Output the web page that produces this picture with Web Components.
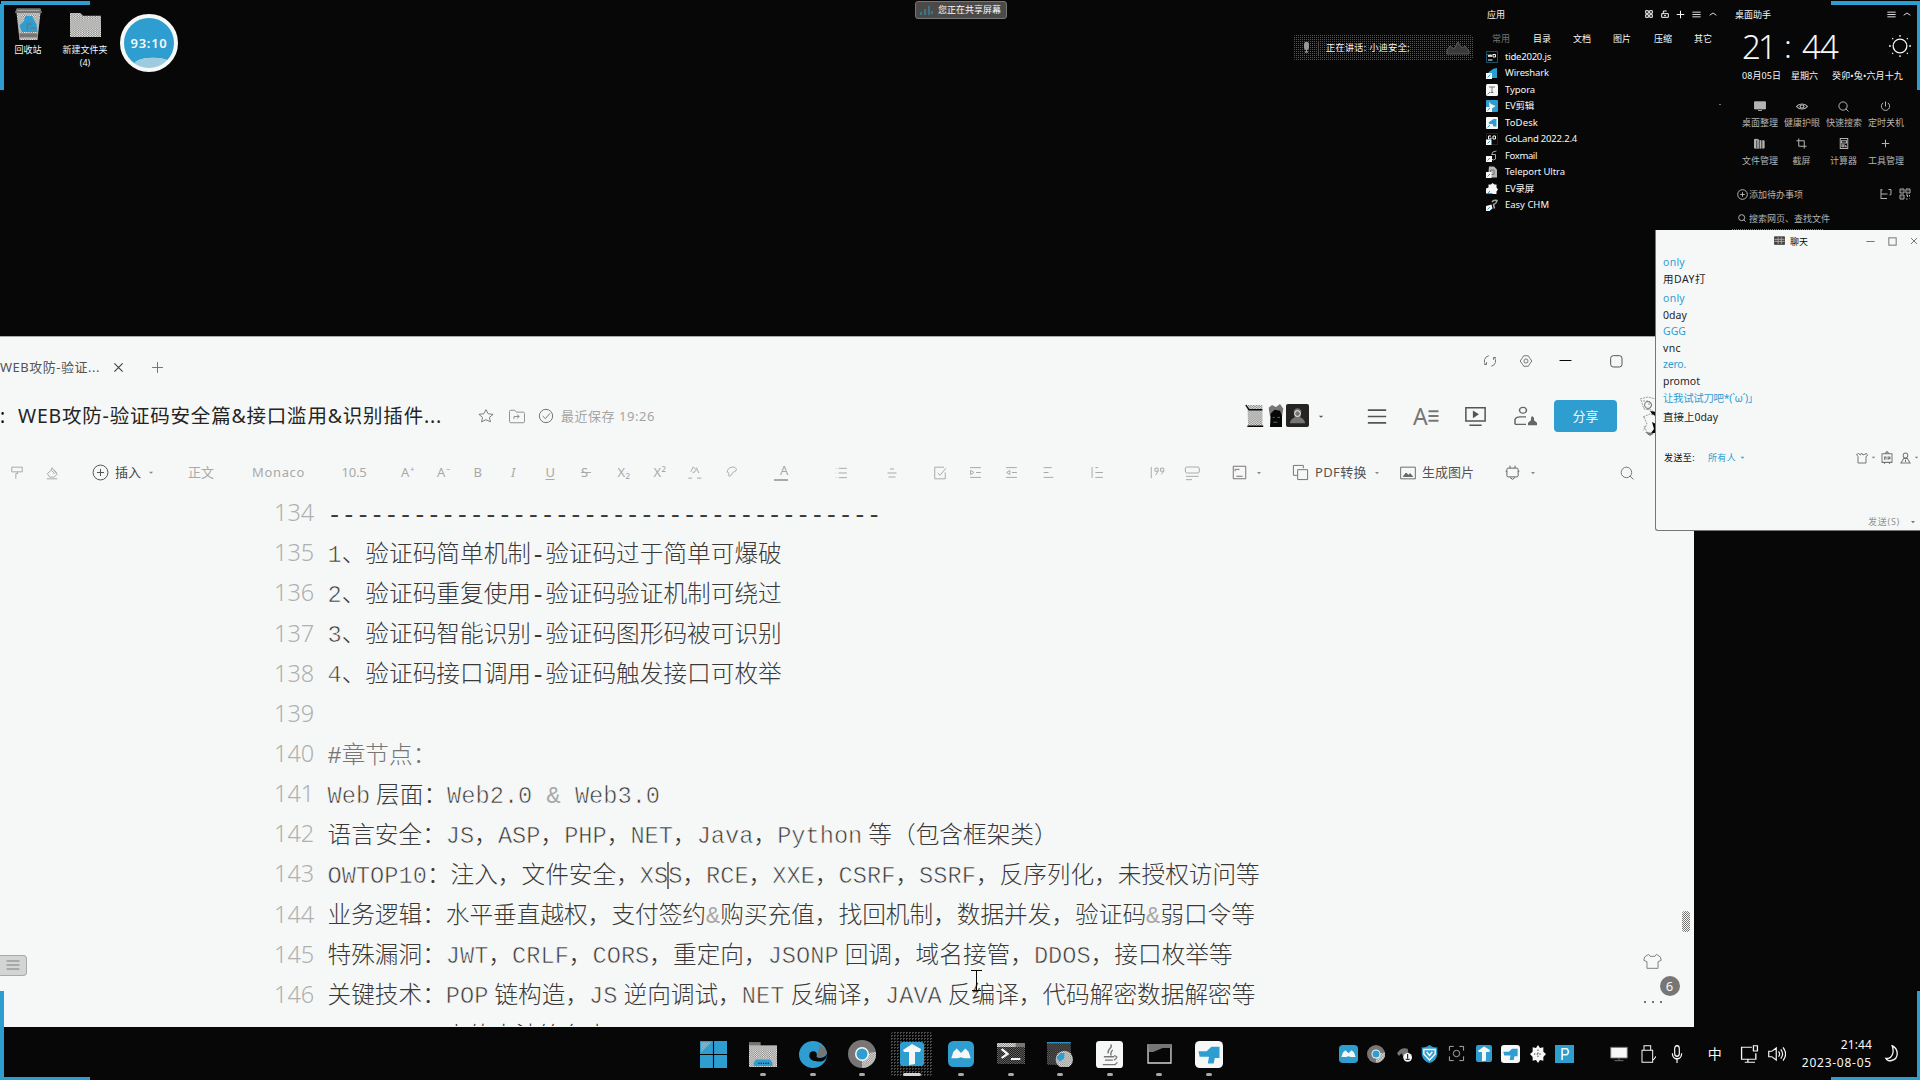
<!DOCTYPE html>
<html lang="zh-CN">
<head>
<meta charset="utf-8">
<title>Desktop</title>
<style>
html,body{margin:0;background:#070707;overflow:hidden}
body{width:1920px;height:1080px}
</style>
</head>
<body>
<desk-top></desk-top>
<script>
const BASE = `*{box-sizing:border-box}
:host{--k:#070707;--w:#f6f8f8;--g:#787674;--b:#2e9dd0;display:block;font-family:"Noto Sans","Noto Sans CJK SC",sans-serif;line-height:1}
.row{display:flex;align-items:center;white-space:nowrap}
.c{display:flex;flex:none;align-items:center;justify-content:center}`;

const ICONS = {
  star:'<path d="M12 2.5l2.9 6.2 6.6.8-4.9 4.6 1.3 6.7L12 17.500l-5.900 3.300 1.300-6.700L2.500 9.500l6.600-.8z"/>',
  movefolder:'<path d="M4 2h5l2 3h9q2 0 2 2v13q0 2-2 2H4q-2 0-2-2V4q0-2 2-2zM8 16v-4h7m-3-3 3 3-3 3"/>',
  okc:'<circle cx="12" cy="12" r="10"/><path d="M7 12l4 4 7-8"/>',
  x:'<path d="M3 3l18 18M21 3L3 21"/>',
  plus:'<path d="M12 2v20M2 12h20"/>',
  min:'<path d="M1 12h22"/>',
  sq:'<rect x="4" y="4" width="17" height="17" rx="4"/>',
  sqh:'<rect x="4" y="4" width="16" height="16"/>',
  refresh:'<path d="M10 3a9.500 9.500 0 0 0-5 16M14 21a9.500 9.500 0 0 0 5-16M2 18h4v-4M22 6h-4v4"/>',
  gear:'<path d="M8 3h8l2 3.500 4 5.500-4 5.500-2 3.500H8l-2-3.500L2 12l4-5.500z"/><circle cx="12" cy="12" r="3.500"/>',
  roller:'<path d="M3 2h18v8H3zM13 10v3h-3v9"/>',
  broom:'<path d="M3 22h18M4 13l6-5 2-5 3 4 6 7-5 5H8zM11 7l6 7M15 6l5 6"/>',
  pcirc:'<circle cx="12" cy="12" r="10.500"/><path d="M12 7v10M7 12h10"/>',
  menu:'<path d="M1 4h22M1 12h22M1 20h22"/>',
  up:'<path d="M2 17l10-9 10 9"/>',
  down:'<path d="M3 8h18l-9 10z" fill="currentColor" stroke="none"/>',
  downo:'<path d="M4 8l8 9 8-9z" fill="currentColor" stroke="none"/>',
  four:'<path d="M2 2h8v8H2zM14 2h8v8h-8zM2 14h8v8H2zM14 14h8v8h-8z"/>',
  lock:'<path d="M2 11h20v11H2zM7 11V3h10M9 17h6"/>',
  sun:'<circle cx="12" cy="12" r="7.500"/><path d="M12 0v2M12 22v2M0 12h2M22 12h2M3.500 3.500l1 1M19.500 19.500l1 1M20.500 3.500l-1 1M3.500 20.500l1-1"/>',
  monitor:'<path d="M1 2h22v17H1zM8 23h8" fill="currentColor"/>',
  eye:'<path d="M1 12c5-9 17-9 22 0-5 9-17 9-22 0z"/><circle cx="12" cy="12" r="4"/>',
  search:'<circle cx="11" cy="11" r="9"/><path d="M17 17l6 6"/>',
  power:'<path d="M12 1v11M7 4a9 9 0 1 0 10 0"/>',
  folders:'<path d="M1 3h7l3 2v17H1zM12 6h4v16h-4zM18 6h4v16h-4z" fill="currentColor"/><path d="M6 5v17M11.500 5v17M17 5v17" stroke="#070707" stroke-width="1.500"/>',
  crop:'<path d="M6 1v17h17M1 6h17v17"/>',
  calc:'<path d="M3 1h18v22H3zM6 6h12v5H6zM7 15v4h5v-4zM16 15v4h3"/>',
  list2:'<path d="M2 2v20M2 4h3M2 12h13M2 21h12M17 3h5v10l-3 1"/>',
  qr:'<path d="M2 2h8v8H2zM14 2h8v8h-8zM2 14h8v8H2zM5 5.500h2M17 5.500h2M5 18h2M14 14h3v4M21 14v3M14 22h3M21 21v1"/>',
  pdf:'<path d="M16 6V2H2v14h5M8 8h14v14H8z"/>',
  img:'<path d="M1 2h22v20H1z"/><path d="M5 18l4-6 4 4 2-3 4 5z" fill="currentColor"/>',
  plug:'<path d="M5 5h14q2 0 2 2v10q0 2-2 2H5q-2 0-2-2V7q0-2 2-2zM8 5V1M16 5V1M8 20l4 3 4-3M1 10h2M21 10h2"/>',
  tpl:'<path d="M2 2h20v20H2zM6 7h6M7 18h10M5 10V6"/>',
  lst:'<path d="M8 4h14M8 12h14M8 20h14M3 4h1M3 12h1M3 20h1"/>',
  cen:'<path d="M8 4h8M3 12h18M5 20h14"/>',
  chk:'<path d="M3 2h16M3 2v20h18V11M8 12l4 4L22 4"/>',
  ind:'<path d="M2 3h20M13 12h9M2 21h20M3 8l6 4-6 4z"/>',
  out:'<path d="M2 3h20M13 12h9M2 21h20M9 8l-6 4 6 4z"/>',
  ali:'<path d="M3 3h15M3 12h9M3 21h18"/>',
  vli:'<path d="M2 2v20M8 3h5M8 12h14M8 21h14"/>',
  quo:'<path d="M2 3v18M13 10H8V5h5v5l-4 6M22 10h-5V5h5v5l-4 5"/>',
  cmt:'<path d="M4 3h17q2 0 2 3v3q0 3-2 3H4q-2 0-2-3V6q0-3 2-3zM3 17h19M3 22h9"/>',
  pal:'<path d="M4 12C4 0 20 0 21 6c0 6-6 3-8 8-1 5-6 6-7 3 3-2 0-5-1-6"/>',
  wave:'<path d="M2 21h6M16 21h7M6 11l4-8 5 5-5 5M15 4l4 9M9 13l3-3"/>',
  play:'<path d="M1 2h22v15H1zM5 22h14"/><path d="M9 5l7 4.500L9 14z" fill="currentColor" stroke="none"/>',
  ppl:'<circle cx="10" cy="5" r="3.500"/><path d="M2 22v-6q1-3 5-3h6M2 22h11"/><path d="M19 12l2 2v3l3 3v3h-9v-3l3-3v-3z" fill="currentColor" stroke="none"/>',
  ghost:'<path d="M4 22V9L1 5l4-2 4 3 2-4 3 4 7-3 2 4-3 2v13z"/>',
  robot:'<path d="M2 5h20v16H2zM8 5l4-4 4 4M7 16v-5h3v5M14 16v-5h4v3h-4M6 23h2M16 23h2"/>',
  user:'<circle cx="12" cy="7" r="5"/><path d="M2 22l6-9h8l6 9zM12 15v5"/>',
  shirt:'<path d="M7 2 2 6 1 11l4 2v10h14V13l4-2-1-5-5-4-2 3H9z"/>',
  mic:'<rect x="8" y="1" width="8" height="14" rx="4"/><path d="M4 11c0 10 16 10 16 0M12 18v6"/>',
  micf:'<rect x="5" y="1" width="14" height="15" rx="6" fill="currentColor"/><path d="M12 16v6M7 22h10"/>',
  usb:'<path d="M6 1h10v6H6zM3 7h16v16H3zM20 20l4-5"/>',
  pc:'<path d="M1 2h22v16H1z" fill="#f6f8f8" stroke="#787674"/><path d="M12 18v3M6 22h12"/>',
  net:'<path d="M15 3H2v16h18V11M17 1h5v7h-5zM6 23h13M10 19v4"/>',
  spk:'<path d="M1 8h4l6-5v18l-6-5H1zM14 8q3 4 0 8M17 5q5 7 0 14M20 2q7 10 0 20"/>',
  moon:'<path d="M13 1c10 4 12 18-1 21-4 1-8-1-9-3 10 1 14-9 10-18z"/>',
  chat:'<path d="M1 2h22v18H1z" fill="currentColor"/><path d="M1 8h22M1 13h22M9 3v16M16 3v16" stroke="#a9a8a6"/>',
  scan:'<path d="M2 8V2h6M16 2h6v6M22 16v6h-6M8 22H2v-6"/><circle cx="12" cy="12" r="4.500"/>'
};
/* filled, multicolour artwork on the same 24 grid */
const ART = {
  win:'<path fill="#2e9dd0" d="M0 0h11.500v11.500H0zM12.500 0H24v11.500H12.500zM0 12.500h11.500V24H0zM12.500 12.500H24V24H12.500z"/><path fill="url(#ck)" d="M1 1h9L1 10z" opacity=".6"/>',
  explorer:'<path fill="#787674" d="M0 1h10v6H0z"/><path fill="url(#ck)" d="M0 4h24v20H0z"/><path fill="#2e9dd0" d="M6 17h12l2 3v3H4v-3z"/><path stroke="#070707" stroke-dasharray="1 1" d="M8 20.500h9"/>',
  edge:'<circle cx="12" cy="12" r="12" fill="#2e9dd0"/><path d="M9 12c0-4 8-4 6 2 4 2 8 0 9-3 0 6-4 8-9 7-4 0-7-3-6-6z" fill="#070707"/><path fill="#787674" d="M17 3c4 2 7 5 7 8l-6 4c-3 0-3-2-2-4 1-3 2-5 1-8z"/>',
  chrome:'<circle cx="12" cy="12" r="12" fill="#787674"/><path d="M12 12L24 10A12 12 0 0 1 12 24z" fill="url(#ck)"/><circle cx="12" cy="12" r="6" fill="#f6f8f8"/><circle cx="12" cy="12" r="4.700" fill="#2e9dd0"/>',
  typora:'<rect width="24" height="24" rx="3" fill="#2e9dd0"/><path fill="#f6f8f8" d="M3 8l9-6 9 5-1 3h-5v12l-6 1V10H4z"/>',
  mi:'<rect width="24" height="24" rx="5" fill="#2e9dd0"/><path fill="#f6f8f8" d="M3 16l2-6 3-3 4 4 4-4 3 3 2 6h-6l-3-1-3 1z"/>',
  term:'<path fill="url(#dk)" d="M0 2h24v20H0z"/><path fill="url(#ck)" d="M0 1h18v4H0z"/><path fill="#787674" d="M16 1h8v4h-8z"/><path d="M4 7l5 5-5 4M12 17h8" stroke="#f6f8f8" stroke-width="2.200" fill="none"/>',
  py:'<path fill="url(#dk)" d="M0 2h22v20H0z"/><path fill="#2e9dd0" d="M0 1h22v1.200H0z"/><circle cx="16" cy="17" r="8" fill="url(#ck)"/><path fill="#2e9dd0" d="M9 16l3-5h4v5l-4 3z"/>',
  java:'<rect width="24" height="24" rx="3" fill="#f6f8f8"/><path d="M13 3c3 3-4 4-2 8M15 8c-3 2-1 3-2 5M7 14h9M8 17h7M6 21h11l2-2M16 13q5 1 0 4" fill="none" stroke="#787674" stroke-width="1.200"/>',
  cmd:'<path fill="#070707" stroke="#d3d4d4" stroke-width="1.300" d="M1 3h22v18H1z"/><path fill="#787674" d="M1 2h22v4h-8l-9 4H2z"/>',
  todesk:'<rect width="24" height="24" rx="4" fill="#f6f8f8"/><path fill="#2e9dd0" d="M3 9h7l4-4h7v10h-4l-1 5h-5l1-6H4z"/>',
  bin:'<path fill="url(#ck)" d="M1 1h22l-3 23H4z"/><path fill="none" stroke="#787674" stroke-width="1.500" d="M2 1h20l1 2H1z"/><path fill="#787674" d="M4 19h16v3H4z"/><path fill="#2e9dd0" d="M9 6h6l4 6 1 6H6l-2-5 4-3z"/><path fill="none" stroke="#787674" d="M11 11v6M11 12h4M14 15h5"/>',
  folder:'<path fill="url(#ck)" d="M0 1h8l2 2.500h14V24H0z"/>',
  js:'<path fill="#070707" stroke="#2e9dd0" d="M1 1h22v22H1z"/><path stroke="#f6f8f8" stroke-width="2" fill="none" d="M4 7l2 5 2-5 2 5 2-5M14 12V7h5v5h-5M4 18h9"/>',
  shark:'<path fill="#2e9dd0" d="M2 15Q10 3 22 2v20H8z"/><path fill="#f6f8f8" d="M0 12h12v12H0z"/><path stroke="#2e9dd0" stroke-width="2" d="M3 21l6-6"/>',
  wbox:'<rect width="24" height="24" rx="3" fill="#f6f8f8"/><path stroke="#787674" stroke-width="2" fill="none" d="M6 6h12M12 6v11M9 17h6"/><path stroke="#2e9dd0" stroke-width="2" d="M3 21l5-5"/>',
  bbox:'<rect width="24" height="24" rx="2" fill="#2e9dd0"/><path fill="#f6f8f8" d="M6 4l4 4 9 4-7 5v7H0V14h7z"/><path stroke="#2e9dd0" stroke-width="2" d="M3 21l5-5"/>',
  tdk:'<rect width="24" height="24" rx="2" fill="#f6f8f8"/><path fill="#2e9dd0" d="M5 11l10-7h6v15h-6l-2-5H7z"/><path stroke="#2e9dd0" stroke-width="2" d="M3 21l5-5"/>',
  golnd:'<path fill="#070707" stroke="#787674" stroke-dasharray="2 2" d="M1 1h22v22H1z"/><path fill="none" stroke="#f6f8f8" stroke-width="2" d="M10 6H5v6h5V9M14 6h5v6h-5z"/><path fill="#f6f8f8" d="M0 13h11v11H0z"/><path stroke="#2e9dd0" stroke-width="2" d="M3 21l5-5"/>',
  fox:'<path fill="none" stroke="#a9a8a6" stroke-width="2" d="M21 2q-9 0-10 7h8v9q-4 4-8 0"/><path fill="#f6f8f8" d="M0 12h12v12H0z"/><path stroke="#2e9dd0" stroke-width="2" d="M3 21l5-5"/>',
  tele:'<path fill="url(#ck)" d="M6 1h10l6 6v16H4z"/><path fill="none" stroke="#787674" stroke-width="2" d="M9 8h7v9H9z"/><path fill="#f6f8f8" d="M0 12h11v12H0z"/><path stroke="#2e9dd0" stroke-width="2" d="M3 21l5-5"/>',
  blob:'<path fill="#f6f8f8" d="M5 3h5l3-3 4 3h4v6l3 4-3 4v5h-6l-4-1H0V11l5-2z"/><path stroke="#2e9dd0" stroke-width="2" d="M3 21l5-5"/>',
  chm:'<path fill="none" stroke="#a9a8a6" stroke-width="3" d="M12 6q3-5 10-3-1 6-7 8l2 8"/><path fill="#f6f8f8" d="M0 14l11-3 2 8-6 5H0z"/><path stroke="#2e9dd0" stroke-width="2" d="M3 21l5-5"/>',
  bug:'<path fill="#787674" d="M0 11Q6 1 16 4l2 10-8 4-3-7-4 4z"/><circle cx="16" cy="17" r="6.500" fill="#f6f8f8"/><path stroke="#070707" stroke-width="1.500" d="M16 12v7M13 20h6"/>',
  shield:'<path fill="#2e9dd0" d="M1 3q6 1 11-3 5 4 11 3v10q-2 9-11 11Q3 22 1 13z"/><path fill="none" stroke="#f6f8f8" stroke-width="2" d="M4 6h16v6l-8 8-8-8zM8 9l4 5 4-5"/>',
  flower:'<path fill="#f6f8f8" d="M9 4l3-4 3 4 5-1v6l4 3-4 4v5l-5-1-3 4-3-4-5 1v-5l-4-4 4-3V3z"/><path stroke="#787674" stroke-dasharray="2 2" stroke-width="2" d="M6 12h12M12 6v12"/>',
  p:'<path fill="#2e9dd0" d="M0 0h24v24H0z"/><path fill="none" stroke="#f6f8f8" stroke-width="2" d="M9 20V5h6q4 4 0 8H9"/>',
  av1:'<path fill="url(#ck)" d="M3 1h19v23H4z"/><path stroke="#070707" stroke-width="1.500" fill="none" d="M1 1l4 5h17M3 23.200h20"/>',
  av2:'<path fill="#787674" d="M1 4L6 1l6 2 6-3 5 5-2 8H3z"/><path fill="#070707" d="M4 10l6-4 8 1 3 5v12H3z"/><path stroke="#787674" d="M7 14h3M14 14h4M8 19h6"/>',
  av3:'<rect width="24" height="24" rx="2" fill="#252423"/><path fill="#787674" d="M4 20q1-5 5-6l-1-7q4-5 8 0l-1 7q4 1 5 6z"/><circle cx="12" cy="10" r="3" fill="none" stroke="#f6f8f8"/>'
};
const DEFS='<defs><pattern id="ck" width="2" height="2" patternUnits="userSpaceOnUse"><path fill="#787674" d="M0 0h2v2H0z"/><path fill="#f6f8f8" d="M0 0h1v1H0zM1 1h1v1H1z"/></pattern><pattern id="dk" width="2" height="2" patternUnits="userSpaceOnUse"><path fill="#070707" d="M0 0h2v2H0z"/><path fill="#787674" d="M0 0h1v1H0zM1 1h1v1H1z"/></pattern></defs>';

class UiIcon extends HTMLElement{
  connectedCallback(){
    if(this.shadowRoot)return;
    const n=this.getAttribute('name'),w=+this.getAttribute('w')||16,h=+this.getAttribute('h')||w,sw=+this.getAttribute('sw')||1;
    const art=ART[n];
    this.attachShadow({mode:'open'}).innerHTML=`<style>:host{display:block;flex:none;width:${w}px;height:${h}px}svg{display:block}</style>
    <svg width="${w}" height="${h}" viewBox="0 0 24 24" preserveAspectRatio="none" fill="none" ${art?'':`stroke="currentColor" stroke-width="${sw*24/w}"`}>${DEFS}${art||ICONS[n]||''}</svg>`;
  }
}
customElements.define('ui-icon',UiIcon);

/* A single line of text whose tracking is set so that it fills the width w. */
class FitText extends HTMLElement{
  connectedCallback(){
    if(this.shadowRoot)return;
    const w=+this.getAttribute('w');
    this.attachShadow({mode:'open'}).innerHTML=`<style>:host{display:inline-block;flex:none;width:${w}px;white-space:pre}span{display:inline-block}</style><span><slot></slot></span>`;
    const s=this.shadowRoot.querySelector('span'),n=[...this.textContent].length;
    const nat=s.getBoundingClientRect().width;
    if(nat)s.style.letterSpacing=((w-nat)/n).toFixed(3)+'px';
  }
}
customElements.define('fit-text',FitText);

const T=(x,w,t,st='')=>[x,w,`<fit-text w="${w}" style="${st}">${t}</fit-text>`];
const I=(cx,w,name,o={})=>[cx-w/2,w,`<ui-icon name="${name}" w="${w}" h="${o.h||w}" sw="${o.sw||1}" style="${o.c?'color:'+o.c+';':''}${o.st||''}"></ui-icon>`];
/* Flex row: every item keeps its own width, and the gap before it. */
function row(x0,h,items,st=''){
  let p=x0,o=`<div class="row" style="height:${h}px;${st}">`;
  for(const [x,w,html] of items){o+=`<span class="c" style="margin-left:${+(x-p).toFixed(2)}px;width:${w}px">${html}</span>`;p=x+w}
  return o+'</div>';
}
function define(tag,css,html){
  customElements.define(tag,class extends HTMLElement{
    connectedCallback(){
      if(this.shadowRoot)return;
      this.attachShadow({mode:'open'}).innerHTML=`<style>${BASE}${css}</style>${html}`;
    }
  });
}

define('desk-shortcut',':host{width:60px;color:#f6f8f8;font-size:9px;text-align:center}div{display:flex;flex-direction:column;align-items:center}.i{height:36px;padding-bottom:2px;justify-content:center}.t{line-height:13px;white-space:pre}',
  '<div class="i"><slot name="icon"></slot></div><div class="t"><slot></slot></div>');

define('timer-ball',`:host{width:58px;height:58px}
.o{width:58px;height:58px;border-radius:50%;border:4px solid var(--w);background:radial-gradient(ellipse 26px 9px at 29px 46px,#9fcbe0 70%,transparent 74%),var(--b);display:flex;align-items:center;justify-content:center;color:var(--w);font-size:13px;font-weight:600}`,
  '<div class="o"><fit-text w="37">93:10</fit-text></div>');

define('share-badge',`:host{width:92px;height:18px;border-radius:3px;border:1px solid var(--g);background:#4b4a49;color:var(--w);font-size:9px}`,
  row(915,16,[[919,14,'<svg width="14" height="12" fill="none" stroke="#2e9dd0"><path d="M1 11V8M5 11V5M9 11V2M12 10V7"/></svg>'],T(937,63,'您正在共享屏幕','margin-top:-1px')]));

define('speaker-pill',`:host{width:180px;height:25px;border-radius:3px;color:var(--w);font-size:9px;background:repeating-conic-gradient(#565453 0 25%,#070707 0 100%) 0 0/2px 2px}`,
  row(1293,25,[I(1306,7,'micf',{h:11,c:'#9a9896'}),[1318,1,'<i style="width:1px;height:14px;background:#4b4a49"></i>'],T(1326,84,'正在讲话: 小迪安全;','text-shadow:0 0 2px #000'),[1446,24,'<svg width="24" height="14" fill="#3a3938" stroke="#5b5a58"><path d="M1 13V9l3-4 4 3 4-7 4 6 3-2 4 5v3z"/></svg>']]));

const apps=[['js','tide2020.js',46],['shark','Wireshark',44],['wbox','Typora',30],['bbox','EV剪辑',29],['tdk','ToDesk',33],['golnd','GoLand 2022.2.4',72],['fox','Foxmail',32],['tele','Teleport Ultra',60],['blob','EV录屏',29],['chm','Easy CHM',44]];
define('app-panel',`:host{width:240px;color:var(--w);font-size:9.5px}`,
  row(1480,16,[T(1487,18,'应用','font-size:9px'),I(1649,8,'four'),I(1665,8,'lock'),I(1680,9,'plus'),I(1696,9,'menu',{h:7}),I(1712.5,8,'up',{h:6})],'margin-bottom:8px')+
  row(1480,16,[['常用',1492,'#787674'],['目录',1533],['文档',1573],['图片',1613],['压缩',1654],['其它',1694]].map(a=>T(a[1],18,a[0],`font-size:9px;color:${a[2]||'#f6f8f8'}`)),'margin-bottom:2px')+
  apps.map(a=>row(1480,16.5,[I(1492,12,a[0],{st:'margin-top:1px'}),T(1505,a[2],a[1])])).join(''));

define('assist-panel',`:host{width:190px;color:var(--w);font-size:9px}.dim{color:#b4b3b1}`,
  row(1730,16,[T(1735,36,'桌面助手'),I(1891.5,9,'menu',{h:7}),I(1907,8,'up',{h:6})],'margin-bottom:2px')+
  row(1730,44,[T(1742,32,'21','font-size:33px;font-weight:300'),T(1784,9,':','font-size:32px;font-weight:300'),T(1802,36,'44','font-size:33px;font-weight:300'),I(1900,22,'sun',{sw:1.3})])+
  row(1730,16,[T(1742,39,'08月05日'),T(1791,27,'星期六'),T(1832,71,'癸卯•兔•六月十九')],'margin:-1px 0 15px')+
  '<div class="dim">'+
  row(1730,16,[I(1760,12,'monitor',{h:10}),I(1802,12,'eye',{h:9,sw:1.300}),I(1843,11,'search'),I(1885.5,11,'power')])+
  row(1730,18,[T(1742,36,'桌面整理'),T(1784,36,'健康护眼'),T(1826,36,'快速搜索'),T(1868,36,'定时关机')],'margin:-1px 0 4px')+
  row(1730,16,[I(1759,11,'folders'),I(1801.500,11,'crop'),I(1843.500,10,'calc',{h:11}),I(1885.500,9,'plus')],'margin-bottom:2px')+
  row(1730,16,[T(1742,36,'文件管理'),T(1792.500,18,'截屏'),T(1830,27,'计算器'),T(1868,36,'工具管理')],'margin:-1px 0 18px')+
  row(1730,16,[I(1742,11,'pcirc'),T(1749,54,'添加待办事项'),I(1886,12,'list2'),I(1905,12,'qr')],'margin-bottom:8px')+
  row(1730,16,[I(1741.500,8,'search'),T(1749,81,'搜索网页、查找文件')])+
  '</div>');

const msgs=[['only',263,22,1],['用DAY打',280,43,0],['only',299,22,1],['0day',315.500,24,0],['GGG',332,23,1],['vnc',348.500,18,0],['zero.',365,23,1],['promot',381.500,37,0],['让我试试刀吧*(`ω´)」',399,95,1],['直接上0day',418,55,0]];
let mp=249.3;
const msgHtml=msgs.map(m=>{const mt=m[1]-8-mp;mp=m[1]+8;return row(1656,16,[T(1663,m[2],m[0])],`margin-top:${mt.toFixed(1)}px;color:${m[3]?'#2e9dd0':'#252423'}`)}).join('');
define('chat-window',`:host{width:265px;height:301px;background:var(--w);border-left:1px solid var(--g);border-bottom:1px solid var(--g);border-bottom-left-radius:3px;font-size:10.5px;color:var(--k)}`,
  row(1656,19,[I(1779.500,11,'chat',{h:10,c:'#454443'}),T(1790,18,'聊天','font-size:9px'),I(1870,9,'min',{c:'#787674'}),I(1892,11,'sqh',{c:'#787674'}),I(1914,8,'x',{c:'#787674'})],'padding-top:3px')+
  msgHtml+
  row(1656,16,[T(1664,31,'发送至:','font-size:9px'),T(1708,28,'所有人','font-size:9px;color:#2e9dd0'),I(1742.500,5,'down',{c:'#2e9dd0'}),I(1862,12,'ghost',{c:'#787674'}),I(1873,5,'downo',{c:'#787674'}),I(1887,12,'robot',{c:'#787674',h:13}),I(1905.500,11,'user',{c:'#787674',h:12}),I(1916,5,'downo',{c:'#787674'})],'margin-top:24px')+
  row(1656,16,[T(1868,32,'发送(S)','font-size:9px;color:#92918f'),I(1913,6,'downo',{c:'#787674'})],'margin-top:48px'));

define('doc-titlebar',`:host{color:#252423;margin-top:-1px}`,
  row(0,48,[T(0,100,'WEB攻防-验证...','font-size:13px;color:#565453'),I(118.500,11,'x',{c:'#454443',sw:1.200}),I(157.500,13,'plus',{c:'#787674'}),
    I(1490,14,'refresh',{c:'#787674',st:'margin-top:-13px'}),I(1526,14,'gear',{c:'#787674',st:'margin-top:-13px'}),I(1565,13,'min',{c:'#070707',st:'margin-top:-13px'}),I(1616,16,'sq',{c:'#565453',st:'margin-top:-13px'})],'padding-top:14px'));

define('doc-header',`.b{width:63px;height:32px;border-radius:4px;background:var(--b);color:var(--w);display:flex;align-items:center;justify-content:center;font-size:13px}`,
  row(0,64,[T(0,5,':','font-size:19px'),T(18,424,'WEB攻防-验证码安全篇&amp;接口滥用&amp;识别插件...','font-size:19.500px;color:#252423'),
   I(485.500,18,'star',{h:16,c:'#787674'}),I(517,18,'movefolder',{h:15,c:'#8a8987'}),I(546,16,'okc',{c:'#787674'}),T(561,94,'最近保存 19:26','font-size:13px;color:#a5a5a4'),
   I(1254.500,19,'av1',{h:23,st:'margin-top:-1px'}),I(1276,16,'av2',{h:23,st:'margin-top:-1px'}),I(1297.500,23,'av3',{st:'margin-top:-1px'}),I(1320.500,6,'down',{c:'#565453',h:5}),
   I(1376.500,20,'menu',{h:19,c:'#565453',sw:1.700}),T(1413,15,'A','font-size:23px;color:#787674;'),I(1433,11,'menu',{h:14,c:'#787674',sw:1.600}),
   I(1475.500,21,'play',{c:'#565453',sw:1.500}),I(1524.500,24,'ppl',{c:'#666563',h:20,sw:1.500}),[1554,63,'<div class="b"><fit-text w="26">分享</fit-text></div>'],
   [1639,17,'<svg width="17" height="40"><g fill="none" stroke="#9a9997" stroke-dasharray="2 1"><path d="M1 3l8-2 8 2M2 4l3 9 7 1 5 3M4 5h6l3 4-4 5M9 8h3M4 21l7-3 6 2M5 21l3 7-4 7M5 30l4 8h6"/></g><circle cx="9" cy="9" r="3.500" fill="none" stroke="#787674"/><path d="M11 15l6 1v4l-4-2zM13 26l4 2v9h-5l3-4z" fill="#070707"/><path d="M6 36l9 1-4 3z" fill="#787674"/></svg>']]));

const L='#a9a9a8',TX=(cx,w,t,st='')=>T(cx-w/2,w,t,`color:${L};font-size:13px;${st}`);
define('doc-toolbar',`:host{position:relative}`,
  row(0,48,[I(17,14,'roller',{c:L}),I(52,14,'broom',{c:L}),I(100.500,17,'pcirc',{c:'#565453'}),T(115,26,'插入','font-size:13px;color:#454443'),I(150.500,6,'down',{c:'#8a8987',h:5}),
  TX(201,26,'正文'),TX(278.500,53,'Monaco'),TX(354,25,'10.5'),TX(408,14,'A⁺'),TX(444,14,'A⁻'),TX(478,9,'B'),TX(514,6,'I','font-style:italic'),TX(550,9,'<span style="text-decoration:underline;text-underline-offset:2px">U</span>'),TX(586,10,'<span style="text-decoration:line-through">S</span>'),TX(624,13,'X₂'),TX(660,13,'X²'),
  I(694.500,15,'wave',{c:L}),I(731,13,'pal',{c:L}),TX(781,14,'A','border-bottom:2px solid #a9a9a8;height:17px;text-indent:3px'),I(841,14,'lst',{c:L}),I(892,12,'cen',{c:L}),I(939.500,14,'chk',{c:L}),I(975,13,'ind',{c:L}),I(1011,13,'out',{c:L}),I(1048,13,'ali',{c:L}),I(1097,13,'vli',{c:L}),I(1157,15,'quo',{c:L}),I(1192,16,'cmt',{c:L}),
  I(1239,15,'tpl',{c:'#787674'}),I(1258.500,6,'downo',{c:'#8a8987'}),I(1300.500,17,'pdf',{c:'#787674'}),T(1315,52,'PDF转换','font-size:13px;color:#565453'),I(1376.500,6,'downo',{c:'#8a8987'}),I(1407.500,16,'img',{h:14,c:'#666563'}),T(1422,52,'生成图片','font-size:13px;color:#565453'),I(1512,15,'plug',{c:'#666563'}),I(1533,6,'downo',{c:'#8a8987'}),I(1627,14,'search',{c:'#787674'})],'padding-top:1px'));

const S='<b> </b>';
const lines=[
 ['134','-'.repeat(39)],['135','1、验证码简单机制-验证码过于简单可爆破'],['136','2、验证码重复使用-验证码验证机制可绕过'],['137','3、验证码智能识别-验证码图形码被可识别'],['138','4、验证码接口调用-验证码触发接口可枚举'],['139',''],['140','<em>#章节点：</em>'],
 ['141',`Web${S}层面：Web2.0 <s>&amp;</s> Web3.0`],['142',`语言安全：JS，ASP，PHP，NET，Java，Python${S}等（包含框架类）`],
 ['143','OWTOP10：注入，文件安全，XS<u></u>S，RCE，XXE，CSRF，SSRF，反序列化，未授权访问等'],
 ['144','业务逻辑：水平垂直越权，支付签约<s>&amp;</s>购买充值，找回机制，数据并发，验证码<s>&amp;</s>弱口令等'],
 ['145',`特殊漏洞：JWT，CRLF，CORS，重定向，JSONP${S}回调，域名接管，DDOS，接口枚举等`],
 ['146',`关键技术：POP${S}链构造，JS${S}逆向调试，NET${S}反编译，JAVA${S}反编译，代码解密数据解密等`],
 ['147','<q></q>小的大法算备力']];
/* Latin runs are drawn thinner than the CJK glyphs around them. */
const thin=h=>h.split(/(<[^>]*>|&amp;)/).map(p=>p[0]==='<'||p==='&amp;'?p:p.replace(/[!-~]+/g,m=>m.length>30||m==='-'||m==='#'?m:`<i>${m}</i>`)).join('');
define('code-view',`:host{overflow:hidden;height:534px}
.l{display:flex;height:40.170px;align-items:center;padding-left:274px;white-space:pre;font:300 23.660px "Liberation Mono","Noto Sans CJK SC",monospace;line-height:40px;color:#3a3938}
.l:first-child .t{color:#787674}
.t{height:40px;margin-top:7px}
.n{flex:none;width:53.500px;font:300 23.500px "Noto Sans",sans-serif;line-height:40px;color:#b0b0af}
i{font-style:normal;-webkit-text-stroke:.6px #f6f8f8}
b{font-size:10px;line-height:0}em{font-style:normal;color:#787674}s{text-decoration:none;color:#a9a9a8}u{display:inline-block;width:2px;height:27px;margin:0 -1px;background:var(--g);vertical-align:-6px}q{display:inline-block;width:117px;quotes:none}`,
  lines.map(l=>`<div class="l"><span class="n">${l[0]}</span><span class="t">${thin(l[1])}</span></div>`).join(''));

define('doc-window',`:host{width:1694px;height:691px;background:var(--w);border-top:1px solid #a9a9a8;overflow:hidden;position:relative}
.f{position:absolute}
.side{left:0;top:618px;width:27px;height:21px;background:#d3d4d4;border:1px solid #a9a9a8;border-left:0;border-radius:0 4px 4px 0;color:var(--g);padding:3px 6px}
.sb{left:1682px;top:574px;width:8px;height:21px;border-radius:3px;background:repeating-conic-gradient(#787674 0 25%,#f6f8f8 0 50%) 0 0/2px 2px}
.shirt{left:1643px;top:616px;color:var(--g)}
.six{left:1659.500px;top:639px;width:20px;height:20px;border-radius:50%;background:var(--g);color:var(--w);font-size:13px;display:flex;align-items:center;justify-content:center}
.dots{left:1644px;top:664px;display:flex;gap:6px}.dots i{width:2px;height:2px;background:var(--g)}
.ib{left:970px;top:632px}`,
 `<doc-titlebar></doc-titlebar><doc-header></doc-header><doc-toolbar></doc-toolbar><code-view style="margin-top:-4px"></code-view>
 <div class="f side"><ui-icon name="menu" w="14" h="12"></ui-icon></div><div class="f sb"></div><div class="f shirt"><ui-icon name="shirt" w="19" h="16"></ui-icon></div><div class="f six">6</div><div class="f dots"><i></i><i></i><i></i></div>
 <svg class="f ib" width="13" height="22" fill="none" stroke="#070707"><path d="M1 1.500h11M6.500 1v20M2 21.500h9"/></svg>`);

define('task-app',`:host{width:43px;height:44px;border-radius:4px;flex:none}
:host([active]){background:repeating-conic-gradient(#4b4a49 0 25%,#070707 0 100%) 0 0/3px 3px}
.w{display:flex;flex-direction:column;align-items:center;height:44px}.i{height:45px;display:flex;align-items:center;flex:none}
.u{width:6px;height:3px;border-radius:2px;background:#a9a8a6;margin-top:-4px}
:host([active]) .u{width:18px;background:#d3d4d4}:host([idle]) .u{visibility:hidden}`,
 '<div class="w"><div class="i"><slot></slot></div><div class="u"></div></div>');

define('task-bar',`:host{width:1920px;height:53px;color:var(--w)}.bar{display:flex;height:53px;align-items:center}.apps{display:flex;gap:6.560px;margin-left:692px;flex:none}
.tray{flex:none}.time{display:flex;flex-direction:column;align-items:flex-end;font-size:12px;line-height:18px}`,
 `<div class="bar"><div class="apps">${[['win',27,27,'idle'],['explorer',28,26],['edge',28,27],['chrome',28,28],['typora',24,24,'active'],['mi',26,26],['term',28,24],['py',26,26],['java',27,27],['cmd',25,24],['todesk',28,27]].map(a=>`<task-app ${a[3]||''}><ui-icon name="${a[0]}" w="${a[1]}" h="${a[2]}"></ui-icon></task-app>`).join('')}</div>
 <div class="tray">${row(1230.600,53,[I(1349,19,'mi',{h:18}),I(1376.500,18,'chrome'),I(1405,16,'bug'),I(1430,17,'shield',{h:18}),I(1457,17,'scan',{c:'#a9a8a6'}),I(1484.500,16,'typora',{h:17}),I(1511,19,'todesk',{h:18}),I(1538.500,16,'flower',{h:18}),I(1565,19,'p',{h:18}),
 I(1619,18,'pc',{h:16,c:'#787674'}),I(1648,16,'usb',{h:18}),I(1677.500,14,'mic',{h:18,sw:1.200}),T(1708,14,'中','font-size:14px'),I(1750,19,'net',{h:18,sw:1.300}),I(1777,18,'spk',{h:16,sw:1.200}),
 [1802,70,'<div class="time"><fit-text w="31">21:44</fit-text><fit-text w="70">2023-08-05</fit-text></div>'],I(1892,15,'moon',{h:17,sw:1.300})])}</div></div>`);

define('desk-top',`:host{width:1920px;height:1080px;background:var(--k);position:relative;overflow:hidden}
.p{position:absolute;display:block}.k{background:var(--b)}`,
 `<desk-shortcut class="p" style="left:-2px;top:7px"><ui-icon slot="icon" name="bin" w="27" h="32"></ui-icon>回收站</desk-shortcut>
 <desk-shortcut class="p" style="left:55px;top:7px"><ui-icon slot="icon" name="folder" w="31" h="25"></ui-icon>新建文件夹<br>(4)</desk-shortcut>
 <timer-ball class="p" style="left:120px;top:14px"></timer-ball>
 <share-badge class="p" style="left:915px;top:1px"></share-badge>
 <speaker-pill class="p" style="left:1293px;top:35px"></speaker-pill>
 <app-panel class="p" style="left:1480px;top:6px"></app-panel>
 <assist-panel class="p" style="left:1730px;top:6px"></assist-panel>
 <i class="p" style="left:1719px;top:104px;width:2px;height:1px;background:#787674"></i>
 <i class="p" style="left:1732px;top:229px;width:92px;height:1px;background:repeating-linear-gradient(90deg,#787674 0 1px,transparent 1px 2px)"></i>
 <doc-window class="p" style="left:0;top:336px"></doc-window>
 <chat-window class="p" style="left:1655px;top:230px"></chat-window>
 <task-bar class="p" style="left:0;top:1027px"></task-bar>
 ${[[1,1,89,4],[0,4,4,86],[1831,1,89,4],[1917,1,3,89],[0,991,4,89],[0,1077,90,3],[1917,991,3,89],[1831,1077,89,3]].map(r=>`<i class="p k" style="left:${r[0]}px;top:${r[1]}px;width:${r[2]}px;height:${r[3]}px"></i>`).join('')}`);
</script>
</body>
</html>
